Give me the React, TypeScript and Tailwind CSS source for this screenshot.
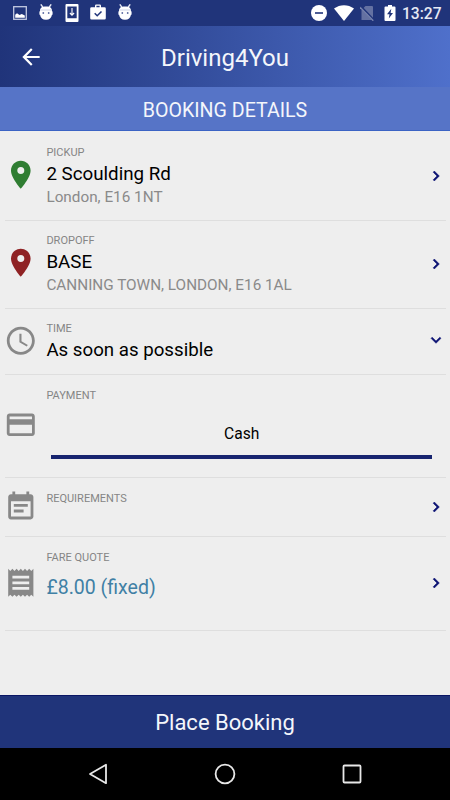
import type { ReactNode } from 'react';
import clsx from 'clsx';

const PATHS = {
  pin: 'M12 2C8.13 2 5 5.13 5 9c0 5.25 7 13 7 13s7-7.75 7-13c0-3.87-3.13-7-7-7zm0 9.5a2.5 2.5 0 1 1 0-5 2.5 2.5 0 0 1 0 5z',
  clock:
    'M11.99 2C6.47 2 2 6.48 2 12s4.47 10 9.99 10C17.52 22 22 17.52 22 12S17.52 2 11.99 2zM12 20c-4.42 0-8-3.58-8-8s3.58-8 8-8 8 3.58 8 8-3.58 8-8 8zm.5-13H11v6l5.25 3.15.75-1.23-4.5-2.67z',
  card: 'M20 4H4c-1.11 0-1.99.89-1.99 2L2 18c0 1.11.89 2 2 2h16c1.11 0 2-.89 2-2V6c0-1.11-.89-2-2-2zm0 14H4v-6h16v6zm0-10H4V6h16v2z',
  note: 'M17 10H7v2h10v-2zm2-7h-1V1h-2v2H8V1H6v2H5c-1.11 0-1.99.9-1.99 2L3 19a2 2 0 0 0 2 2h14c1.1 0 2-.9 2-2V5c0-1.1-.9-2-2-2zm0 16H5V8h14v11zm-5-5H7v2h7v-2z',
  receipt:
    'M18 17H6v-2h12v2zm0-4H6v-2h12v2zm0-4H6V7h12v2zM3 22l1.5-1.5L6 22l1.5-1.5L9 22l1.5-1.5L12 22l1.5-1.5L15 22l1.5-1.5L18 22l1.5-1.5L21 22V2l-1.5 1.5L18 2l-1.5 1.5L15 2l-1.5 1.5L12 2l-1.5 1.5L9 2 7.5 3.5 6 2 4.5 3.5 3 2v20z',
  right: 'M10 6 8.59 7.41 13.17 12l-4.58 4.59L10 18l6-6z',
  down: 'M16.59 8.59 12 13.17 7.41 8.59 6 10l6 6 6-6z',
  back: 'M20 11H7.83l5.59-5.59L12 4l-8 8 8 8 1.41-1.41L7.83 13H20v-2z',
};

function Icon({ name, className }: { name: keyof typeof PATHS; className?: string }) {
  return (
    <svg viewBox="0 0 24 24" fill="currentColor" className={clsx('shrink-0', className)}>
      <path d={PATHS[name]} />
    </svg>
  );
}

function DroidIcon({ className }: { className?: string }) {
  return (
    <svg viewBox="0 0 14 16" className={clsx('h-4 w-3.5 shrink-0', className)}>
      <path d="M1.8.4 4 3.4M12.2.4 10 3.4" stroke="#e4e8f3" strokeWidth="1.5" />
      <path d="M1 7C1 4 2.8 2.6 7 2.6S13 4 13 7l.6.8v2.6l-.7.6C12.3 14.2 10.5 15.7 7 15.7S1.7 14.2 1.1 11l-.7-.6V7.8z" fill="#fff" />
      <path d="M1.3 6h11.4" stroke="#c3cae2" strokeWidth=".8" />
      <circle cx="4.3" cy="9" r=".9" fill="#5d6ca3" />
      <circle cx="9.7" cy="9" r=".9" fill="#5d6ca3" />
    </svg>
  );
}

function StatusBar() {
  return (
    <div className="flex h-[26px] items-center bg-[#20347a] text-white">
      <svg viewBox="0 0 14 14" className="ml-[13px] h-3.5 w-3.5 shrink-0">
        <rect x=".7" y=".7" width="12.6" height="12.6" fill="none" stroke="#c3cae2" strokeWidth="1.3" />
        <path d="M2.2 11.8v-3L4 7.200 6.500 9l2.300-1 3 1.500v2.300z" fill="#fff" />
      </svg>
      <DroidIcon className="ml-3 -translate-y-px" />
      <svg viewBox="0 0 14 18" className="ml-3 h-[18px] w-3.5 shrink-0">
        <path fillRule="evenodd" d="M1.5 0h11q1 0 1 1v16q0 1-1 1h-11q-1 0-1-1V1q0-1 1-1zM2.3 2.6v11.6h9.4V2.6z" fill="#fff" />
        <path d="M7 4v7M4.9 9 7 11.2 9.1 9" fill="none" stroke="#fff" strokeWidth="1.1" />
      </svg>
      <svg viewBox="0 0 16 16" className="ml-[11px] h-4 w-4 shrink-0 -translate-y-px">
        <path fillRule="evenodd" d="M5 3.3V1.8Q5 .5 6.3.5h3.4Q11 .5 11 1.8v1.5h3.5q1.3 0 1.3 1.3v9.6q0 1.3-1.3 1.3h-13Q.2 15.5.2 14.2V4.6q0-1.3 1.3-1.3zM6.4 1.8v1.5h3.2V1.8z" fill="#fff" />
        <path d="m4.7 9.3 2.5 2.5 4.3-4.4" fill="none" stroke="#20347a" strokeWidth="1.5" />
      </svg>
      <DroidIcon className="ml-3 -translate-y-px" />

      <svg viewBox="0 0 16 16" className="ml-auto h-4 w-4 shrink-0">
        <circle cx="8" cy="8" r="8" fill="#fff" />
        <path d="M4 8h8" stroke="#20347a" strokeWidth="1.6" />
      </svg>
      <svg viewBox="0 0 20 16" className="ml-[7px] h-4 w-5 shrink-0">
        <path d="M0 3.6C6-.9 14-.9 20 3.6L10 16z" fill="#fff" />
      </svg>
      <svg viewBox="0 0 14 16" className="ml-[6px] h-4 w-3.5 shrink-0">
        <path d="M5.5 1H12q1 0 1 1v13H1.5V5z" fill="#6471a2" />
        <path d="M.3 1.2 14 15.5" stroke="#20347a" strokeWidth="2.5" />
        <path d="M0 2.2 13.3 15.8" stroke="#7884af" strokeWidth="1.3" />
      </svg>
      <svg viewBox="0 0 12 16" className="ml-2.5 h-4 w-3 shrink-0">
        <path d="M1.5 1.5H4V0h4v1.5h2.5q1 0 1 1V15q0 1-1 1h-9q-1 0-1-1V2.5q0-1 1-1z" fill="#fff" />
        <path d="M7.3 3.8 3 9.3h2.5l-.7 4.2L9 8H6.6z" fill="#20347a" />
      </svg>
      <span className="ml-[6px] mr-[10px] w-[38px] whitespace-nowrap pt-0.5 text-[15.6px] font-medium leading-[24px] text-[#e6e9f4]">
        13:27
      </span>
    </div>
  );
}

type RowProps = {
  icon: keyof typeof PATHS;
  iconColor?: string;
  iconTop: string;
  label: string;
  labelTop: string;
  height: string;
  arrow?: 'right' | 'down';
  arrowTop?: string;
  children?: ReactNode;
};

function Row({ icon, iconColor = 'text-[#888]', iconTop, label, labelTop, height, arrow, arrowTop, children }: RowProps) {
  return (
    <div className={clsx('mx-[4.5px] flex items-start border-b-[1.5px] border-[#dedede]', height)}>
      <Icon name={icon} className={clsx('-ml-[0.4px] h-[33.6px] w-[33.6px]', iconColor, iconTop)} />
      <div className={clsx('ml-[8.7px] min-w-0 flex-1', labelTop)}>
        <div className="text-[11px] leading-[14px] text-[#858585]">{label}</div>
        {children}
      </div>
      {arrow && <Icon name={arrow} className={clsx('h-5 w-5 stroke-[#0a1172] stroke-[0.6px] text-[#0a1172]', arrowTop)} />}
    </div>
  );
}

export default function App() {
  return (
    <div className="flex h-[800px] w-[450px] flex-col overflow-hidden bg-[#eee] font-['Roboto',sans-serif]">
      <StatusBar />

      {/* Header */}
      <div className="flex h-[61px] items-center bg-linear-to-r from-[#20347a] to-[#4f70cb]">
        <Icon name="back" className="ml-[18px] h-[26px] w-[26px] text-white" />
        <h1 className="mr-11 flex-1 pt-[3px] text-center text-[24px] text-[#f4f6fb]">Driving4You</h1>
      </div>
      <h2 className="h-11 border-b border-[#3b63c4] bg-[#5674c7] text-center text-[19.6px] leading-[48px] text-[#f4f6fb]">
        BOOKING DETAILS
      </h2>

      {/* Booking rows */}
      <div className="flex-1">
        <Row icon="pin" iconColor="text-[#2f7d32]" iconTop="mt-[27px]" label="PICKUP" labelTop="mt-[15px]" height="h-[90px]" arrow="right" arrowTop="mt-[34.5px]">
          <div className="mt-px text-[18.75px] leading-[26px] text-black">2 Scoulding Rd</div>
          <div className="text-[15.3px] leading-5 text-[#8a8a8a]">London, E16 1NT</div>
        </Row>
        <Row icon="pin" iconColor="text-[#8f2224]" iconTop="mt-[25px]" label="DROPOFF" labelTop="mt-[13px]" height="h-[88px]" arrow="right" arrowTop="mt-[32.5px]">
          <div className="mt-px text-[18.75px] leading-[26px] text-black">BASE</div>
          <div className="text-[15.3px] leading-5 text-[#8a8a8a]">CANNING TOWN, LONDON, E16 1AL</div>
        </Row>
        <Row icon="clock" iconTop="mt-[15px]" label="TIME" labelTop="mt-[13px]" height="h-[66px]" arrow="down" arrowTop="mt-[21px]">
          <div className="mt-px text-[18.7px] leading-[26px] text-black">As soon as possible</div>
        </Row>
        <Row icon="card" iconTop="mt-[33px]" label="PAYMENT" labelTop="mt-[14px]" height="h-[103px]">
          <div className="ml-[5px] mr-[13.5px] mt-[19px] border-b-4 border-[#17246f] pb-2 text-center text-[15.6px] leading-[25px] text-black">
            Cash
          </div>
        </Row>
        <Row icon="note" iconTop="mt-[12px]" label="REQUIREMENTS" labelTop="mt-[14px]" height="h-[59px]" arrow="right" arrowTop="mt-[18.5px]" />
        <Row icon="receipt" iconTop="mt-[29px]" label="FARE QUOTE" labelTop="mt-[14px]" height="h-[94px]" arrow="right" arrowTop="mt-[36px]">
          <div className="mt-[10px] text-[19.5px] leading-[26px] text-[#3f80a5]">£8.00 (fixed)</div>
        </Row>
      </div>

      <button className="h-[53px] border-t border-[#0a1664] bg-[#20347a] pt-px text-[22px] leading-[51px] text-[#f4f6fb]">
        Place Booking
      </button>

      {/* System navigation */}
      <div className="flex h-[52px] items-center bg-black">
        <svg viewBox="0 0 20 22" className="ml-[88px] h-[22px] w-5" fill="none" stroke="#e8e8e8" strokeWidth="1.8" strokeLinejoin="round">
          <path d="M18 1.8v18.4L2 11z" />
        </svg>
        <svg viewBox="0 0 22 22" className="ml-[106px] h-[22px] w-[22px]" fill="none" stroke="#e8e8e8" strokeWidth="1.8">
          <circle cx="11" cy="11" r="9.4" />
        </svg>
        <svg viewBox="0 0 20 20" className="ml-[106px] h-5 w-5" fill="none" stroke="#e8e8e8" strokeWidth="1.8">
          <rect x="1.5" y="1.5" width="17" height="17" rx="1" />
        </svg>
      </div>
    </div>
  );
}
